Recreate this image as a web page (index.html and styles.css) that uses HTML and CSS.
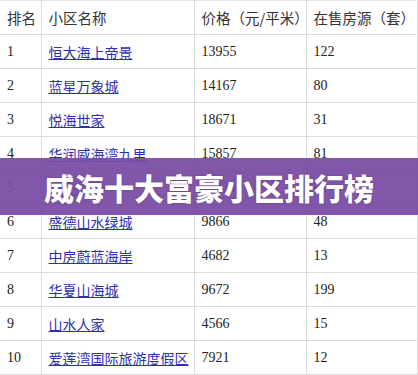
FILE: index.html
```html
<!DOCTYPE html>
<html lang="zh">
<head>
<meta charset="utf-8">
<link rel="stylesheet" href="styles.css">
</head>
<body>
<div class="page">
  <table class="rank">
    <colgroup>
      <col class="c1"><col class="c2"><col class="c3"><col class="c4">
    </colgroup>
    <thead>
      <tr><th>排名</th><th>小区名称</th><th>价格（元/平米）</th><th>在售房源（套）</th></tr>
    </thead>
    <tbody>
      <tr><td>1</td><td><a href="#">恒大海上帝景</a></td><td>13955</td><td>122</td></tr>
      <tr><td>2</td><td><a href="#">蓝星万象城</a></td><td>14167</td><td>80</td></tr>
      <tr><td>3</td><td><a href="#">悦海世家</a></td><td>18671</td><td>31</td></tr>
      <tr><td>4</td><td><a href="#">华润威海湾九里</a></td><td>15857</td><td>81</td></tr>
      <tr><td>5</td><td><a href="#">阳光海岸</a></td><td>11274</td><td>62</td></tr>
      <tr><td>6</td><td><a href="#">盛德山水绿城</a></td><td>9866</td><td>48</td></tr>
      <tr><td>7</td><td><a href="#">中房蔚蓝海岸</a></td><td>4682</td><td>13</td></tr>
      <tr><td>8</td><td><a href="#">华夏山海城</a></td><td>9672</td><td>199</td></tr>
      <tr><td>9</td><td><a href="#">山水人家</a></td><td>4566</td><td>15</td></tr>
      <tr><td>10</td><td><a href="#">爱莲湾国际旅游度假区</a></td><td>7921</td><td>12</td></tr>
    </tbody>
  </table>
  <div class="banner"><h1>威海十大富豪小区排行榜</h1></div>
</div>
</body>
</html>
```

FILE: styles.css
```css
html, body {
  margin: 0;
  padding: 0;
  background: #ffffff;
}
.page {
  position: relative;
  width: 418px;
  height: 375px;
  overflow: hidden;
}
.rank {
  border-collapse: collapse;
  width: 417px;
  table-layout: fixed;
  font-family: "Liberation Serif", "Noto Sans CJK SC", serif;
  font-size: 14px;
  color: #222;
}
.c1 { width: 41px; }
.c2 { width: 153px; }
.c3 { width: 112px; }
.c4 { width: 111px; }
.rank th, .rank td {
  border: 1px solid #dcdcdc;
  height: 33px;
  padding: 0 0 0 7px;
  text-align: left;
  vertical-align: middle;
  white-space: nowrap;
}
.rank tr:first-child th { border-top: 1px solid #e6e6e6; }
.rank th:first-child, .rank td:first-child { border-left: none; }
.rank th {
  font-family: "Noto Sans CJK SC", sans-serif;
  font-weight: normal;
  font-size: 14.5px;
  color: #333;
}
.rank a {
  font-family: "Noto Sans CJK SC", sans-serif;
  font-size: 14px;
  color: #2e2eb0;
  text-decoration: underline;
}
.banner {
  position: absolute;
  left: 0;
  top: 158px;
  width: 418px;
  height: 57px;
  background: rgba(122, 76, 164, 0.94);
  display: flex;
  align-items: center;
  justify-content: center;
}
.banner h1 {
  margin: 0;
  font-family: "Noto Sans CJK SC", sans-serif;
  font-weight: 900;
  font-size: 30px;
  color: #ffffff;
  letter-spacing: 0;
  text-shadow: 0 0 2px rgba(60, 30, 90, 0.5);
}
```
